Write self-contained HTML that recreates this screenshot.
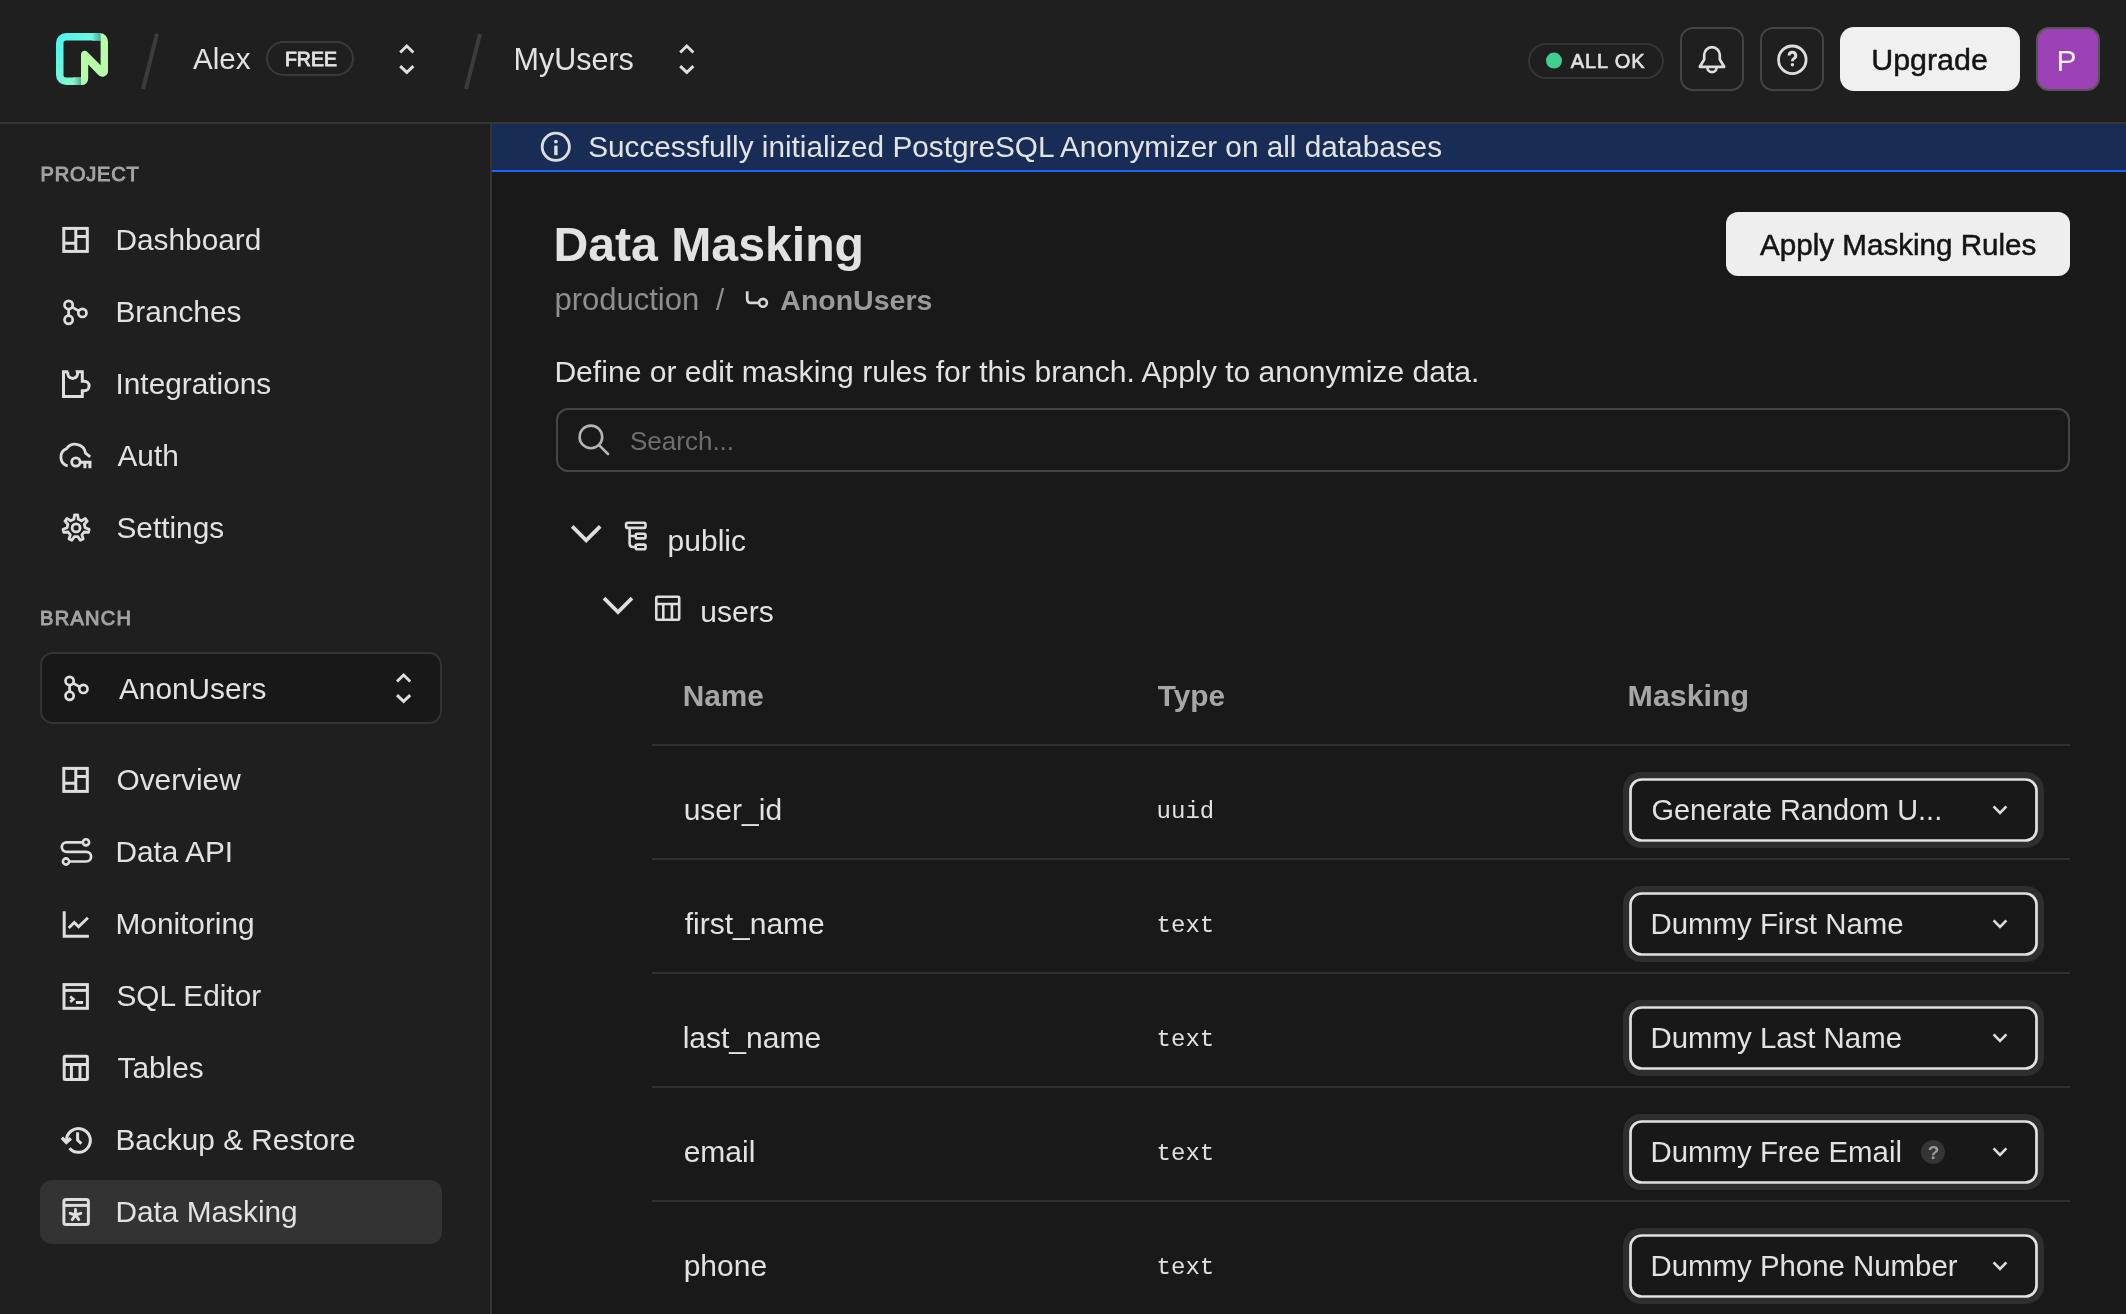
<!DOCTYPE html><html><head><meta charset="utf-8"><style>html,body{margin:0;padding:0;background:#191919;width:2126px;height:1314px;overflow:hidden}svg{position:absolute;left:0;top:0;will-change:transform}text{font-family:"Liberation Sans",sans-serif}text.m{font-family:"Liberation Mono",monospace}</style></head><body>
<svg width="2126" height="1314" viewBox="0 0 2126 1314">
<rect x="0" y="0" width="2126" height="1314" fill="#191919"/>
<rect x="0" y="0" width="2126" height="122" fill="#1f1f1f"/>
<rect x="0" y="122" width="2126" height="2" fill="#353535"/>
<rect x="0" y="124" width="490" height="1190" fill="#1f1f1f"/>
<rect x="490" y="124" width="2" height="1190" fill="#353535"/>
<rect x="492" y="124" width="1634" height="46" fill="#172d55"/>
<rect x="492" y="170" width="1634" height="2" fill="#1c64f2"/>
<defs><linearGradient id="lg" x1="0" y1="0" x2="1" y2="1"><stop offset="0" stop-color="#4ef4f0"/><stop offset="1" stop-color="#9ff9c0"/></linearGradient></defs>
<defs><linearGradient id="sh1" x1="0" y1="0" x2="1" y2="0"><stop offset="0" stop-color="#6ff5dc"/><stop offset="1" stop-color="#4aa89a"/></linearGradient><linearGradient id="sh2" x1="0" y1="0" x2="1" y2="0"><stop offset="0" stop-color="#8df6cf"/><stop offset="1" stop-color="#56a98e"/></linearGradient></defs>
<path d="M81.2 81.25 H66 A6.25 6.25 0 0 1 59.75 75 V43 A6.25 6.25 0 0 1 66 36.75 H100.6" fill="none" stroke="url(#lg)" stroke-width="7.5"/>
<rect x="92" y="33" width="8.6" height="7.5" fill="url(#sh1)"/><rect x="73" y="77.5" width="8.2" height="7.5" fill="url(#sh2)"/>
<path d="M100.6 33 H99.5 A8.5 8.5 0 0 1 108 41.5 V71 A5.6 5.6 0 0 1 98.4 75 L88.2 64.5 V78.6 A6.4 6.4 0 0 1 81.8 85 H81 V54.6 A3.7 3.7 0 0 1 87.4 52 L100.6 65.2 Z" fill="#b7fda9"/>
<line x1="157" y1="34" x2="143" y2="89" stroke="#3c3c3c" stroke-width="4"/>
<line x1="480" y1="34" x2="466" y2="89" stroke="#3c3c3c" stroke-width="4"/>
<rect x="267" y="42" width="86" height="33" rx="16.5" fill="none" stroke="#3a3a3a" stroke-width="2"/>
<path d="M400.2 52.5 L406.8 46 L413.40000000000003 52.5 M400.2 66.1 L406.8 72.4 L413.40000000000003 66.1" fill="none" stroke="#dedede" stroke-width="2.9"/>
<path d="M680.1999999999999 52.5 L686.8 46 L693.4 52.5 M680.1999999999999 66.1 L686.8 72.4 L693.4 66.1" fill="none" stroke="#dedede" stroke-width="2.9"/>
<rect x="1529" y="44" width="134" height="34" rx="17" fill="none" stroke="#353535" stroke-width="2"/>
<circle cx="1554" cy="60.6" r="8" fill="#3fd08f"/>
<rect x="1681" y="28" width="62" height="62" rx="12" fill="none" stroke="#444" stroke-width="2"/>
<rect x="1761" y="28" width="62" height="62" rx="12" fill="none" stroke="#444" stroke-width="2"/>
<path d="M1699.8 66.8 L1704.2 59.5 V55 A7.8 7.8 0 0 1 1719.8 55 V59.5 L1724.2 66.8 Z" fill="none" stroke="#dedede" stroke-width="2.7" stroke-linejoin="round"/>
<path d="M1707.4 67.6 A4.6 4.6 0 0 0 1716.6 67.6" fill="none" stroke="#dedede" stroke-width="2.7"/>
<circle cx="1792.3" cy="59.8" r="13.8" fill="none" stroke="#dedede" stroke-width="2.8"/>
<path d="M1789.1 55.6 A3.3 3.3 0 1 1 1793.9 58.5 Q1792.4 59.3 1792.4 61.3" fill="none" stroke="#dedede" stroke-width="3"/>
<circle cx="1792.4" cy="64.7" r="1.7" fill="#dedede"/>
<rect x="1840" y="27" width="180" height="64" rx="14" fill="#f0f0f0"/>
<rect x="2037" y="28" width="62" height="62" rx="12" fill="#9c40b5" stroke="#555" stroke-width="2"/>
<rect x="41" y="653" width="400" height="70" rx="12" fill="#181818" stroke="#333" stroke-width="2"/>
<path d="M397.0 681.5 L403.6 675 L410.20000000000005 681.5 M397.0 695.1 L403.6 701.4 L410.20000000000005 695.1" fill="none" stroke="#dedede" stroke-width="2.9"/>
<rect x="40" y="1180" width="402" height="64" rx="12" fill="#333333"/>
<g fill="none" stroke="#dedede" stroke-width="3"><rect x="63.8" y="228.4" width="23.5" height="23" /><path d="M75.8 228.4 V251.4 M63.8 243.20000000000002 H75.8 M75.8 236.6 H87.3"/></g>
<g fill="none" stroke="#dedede" stroke-width="3"><rect x="63.8" y="768.4" width="23.5" height="23" /><path d="M75.8 768.4 V791.4 M63.8 783.1999999999999 H75.8 M75.8 776.6 H87.3"/></g>
<g fill="none" stroke="#dedede" stroke-width="2.7" transform="translate(0 0)"><circle cx="68.6" cy="304.9" r="4.1"/><circle cx="68.6" cy="319.8" r="4.1"/><circle cx="82.4" cy="312.9" r="4.1"/><path d="M68.6 309 V315.7 M72.2 307.1 L78.6 310.9"/></g>
<g fill="none" stroke="#dedede" stroke-width="2.7" transform="translate(1 376)"><circle cx="68.6" cy="304.9" r="4.1"/><circle cx="68.6" cy="319.8" r="4.1"/><circle cx="82.4" cy="312.9" r="4.1"/><path d="M68.6 309 V315.7 M72.2 307.1 L78.6 310.9"/></g>
<path d="M68.3 371.7 H63.5 V396.6 H82.3 V390.7 H84.4 A4.7 4.7 0 0 0 84.4 381.3 H82.3 V371.7 H77.4 A5 5 0 1 1 68 371.7 Z" fill="none" stroke="#dedede" stroke-width="3" stroke-linejoin="miter"/>
<path d="M67.7 466 A9.2 9.2 0 0 1 66.6 448.6 A10.6 10.6 0 0 1 85.6 453.2 L90.2 456.8" fill="none" stroke="#dedede" stroke-width="2.8"/>
<circle cx="75.9" cy="462" r="4.2" fill="none" stroke="#dedede" stroke-width="2.8"/>
<path d="M80 462.3 H91.5 M84.9 462.3 V468.2 M89.9 462.3 V468.2" fill="none" stroke="#dedede" stroke-width="3"/>
<path d="M74.53 514.89 L77.67 514.89 L78.32 519.18 L81.54 520.73 L85.29 518.56 L87.25 521.02 L84.30 524.19 L85.10 527.68 L89.13 529.27 L88.43 532.32 L84.11 532.00 L81.88 534.80 L83.16 538.94 L80.33 540.30 L77.89 536.72 L74.31 536.72 L71.87 540.30 L69.04 538.94 L70.32 534.80 L68.09 532.00 L63.77 532.32 L63.07 529.27 L67.10 527.68 L67.90 524.19 L64.95 521.02 L66.91 518.56 L70.66 520.73 L73.88 519.18 Z" fill="none" stroke="#dedede" stroke-width="2.8" stroke-linejoin="round"/><circle cx="76.1" cy="527.9" r="4" fill="none" stroke="#dedede" stroke-width="2.8"/>
<path d="M82.8 842.3 H66.6 A4.8 4.8 0 0 0 66.6 851.9 H86.3 A4.8 4.8 0 0 1 86.3 861.5 H69.3" fill="none" stroke="#dedede" stroke-width="2.7"/>
<circle cx="86" cy="842.3" r="3.1" fill="none" stroke="#dedede" stroke-width="2.6"/><circle cx="66" cy="861.5" r="3.1" fill="none" stroke="#dedede" stroke-width="2.6"/>
<path d="M64.2 911.2 V936.2 H88.9" fill="none" stroke="#dedede" stroke-width="3"/>
<path d="M68.7 928 L74.3 922.5 L78.6 926.7 L87.9 917.8" fill="none" stroke="#dedede" stroke-width="2.9"/>
<g fill="none" stroke="#dedede" stroke-width="3"><rect x="64" y="984.6" width="23.4" height="23.7"/><path d="M64 990.4 H87.4"/></g>
<path d="M70.2 996.6 L73.4 999.3 L70.2 1001.9" fill="none" stroke="#dedede" stroke-width="2.7"/><rect x="75.9" y="1001" width="7.2" height="3" fill="#dedede"/>
<g fill="none" stroke="#dedede" stroke-width="3"><rect x="64.2" y="1056.2" width="23.2" height="23.4" rx="1"/><path d="M64.2 1064.5 H87.4 M71.4 1064.5 V1079.6 M80 1064.5 V1079.6"/></g>
<path d="M66.5 1140.6 A11.9 11.9 0 1 1 69.5 1148.3" fill="none" stroke="#dedede" stroke-width="3"/>
<path d="M61.9 1137.6 L66.3 1142.4 L70.9 1138.4" fill="none" stroke="#dedede" stroke-width="3.4"/>
<path d="M77.6 1132.2 V1140.2 L81.4 1143.6" fill="none" stroke="#dedede" stroke-width="3"/>
<g fill="none" stroke="#dedede" stroke-width="3"><rect x="63.9" y="1199.4" width="24.5" height="25.1" rx="2"/><path d="M63.9 1205.4 H88.4"/></g>
<path d="M75.5 1215 L75.50 1209.40 M75.5 1215 L80.83 1213.27 M75.5 1215 L78.79 1219.53 M75.5 1215 L72.21 1219.53 M75.5 1215 L70.17 1213.27 " fill="none" stroke="#dedede" stroke-width="2.9" stroke-linecap="round"/>
<circle cx="555.8" cy="146.8" r="13.6" fill="none" stroke="#dedede" stroke-width="2.8"/>
<path d="M555.9 145.6 V155.2" stroke="#dedede" stroke-width="3.4"/><circle cx="555.9" cy="141.6" r="1.9" fill="#dedede"/>
<path d="M747.2 291.3 V299 Q747.2 302.9 751.1 302.9 H759" fill="none" stroke="#d6d6d6" stroke-width="2.7"/><circle cx="763" cy="302.8" r="3.9" fill="none" stroke="#d6d6d6" stroke-width="2.6"/>
<rect x="1726" y="212" width="344" height="64" rx="12" fill="#eeeeee"/>
<rect x="557" y="409" width="1512" height="62" rx="11" fill="none" stroke="#454545" stroke-width="2"/>
<circle cx="590.9" cy="436.9" r="11.3" fill="none" stroke="#b4b4b4" stroke-width="2.6"/><path d="M599.3 445.3 L608 454" stroke="#b4b4b4" stroke-width="2.6" stroke-linecap="round"/>
<path d="M572.2 526.4 L586.2 540.4 L600.2 526.4" fill="none" stroke="#dedede" stroke-width="3.7"/>
<path d="M604 598.1 L618 612.1 L632 598.1" fill="none" stroke="#dedede" stroke-width="3.7"/>
<g fill="none" stroke="#dedede" stroke-width="2.6"><rect x="626.1" y="522.7" width="19.4" height="5.2" rx="1.5"/><rect x="635.7" y="533.7" width="9.8" height="4.7" rx="1.5"/><rect x="635.7" y="544.6" width="9.8" height="4.7" rx="1.5"/><path d="M629.6 527.9 V543.5 Q629.6 547 633 547 H635.7 M629.6 536 H635.7"/></g>
<g fill="none" stroke="#dedede" stroke-width="2.6"><rect x="656.3" y="596.7" width="22.9" height="23" rx="1"/><path d="M656.3 604 H679.2 M663.3 604 V619.7 M671.9 604 V619.7"/></g>
<rect x="652" y="744" width="1418" height="2" fill="#303030"/>
<rect x="652" y="858" width="1418" height="2" fill="#303030"/>
<rect x="652" y="972" width="1418" height="2" fill="#303030"/>
<rect x="652" y="1086" width="1418" height="2" fill="#303030"/>
<rect x="652" y="1200" width="1418" height="2" fill="#303030"/>
<rect x="1626" y="775" width="415" height="70" rx="15" fill="none" stroke="#2e2e2e" stroke-width="6"/>
<rect x="1630.5" y="779.5" width="406" height="61" rx="11" fill="#181818" stroke="#e2e2e2" stroke-width="2.7"/>
<path d="M1993.6 806.4 L2000 812.9 L2006.4 806.4" fill="none" stroke="#dedede" stroke-width="2.6"/>
<rect x="1626" y="889" width="415" height="70" rx="15" fill="none" stroke="#2e2e2e" stroke-width="6"/>
<rect x="1630.5" y="893.5" width="406" height="61" rx="11" fill="#181818" stroke="#e2e2e2" stroke-width="2.7"/>
<path d="M1993.6 920.4 L2000 926.9 L2006.4 920.4" fill="none" stroke="#dedede" stroke-width="2.6"/>
<rect x="1626" y="1003" width="415" height="70" rx="15" fill="none" stroke="#2e2e2e" stroke-width="6"/>
<rect x="1630.5" y="1007.5" width="406" height="61" rx="11" fill="#181818" stroke="#e2e2e2" stroke-width="2.7"/>
<path d="M1993.6 1034.3999999999999 L2000 1040.8999999999999 L2006.4 1034.3999999999999" fill="none" stroke="#dedede" stroke-width="2.6"/>
<rect x="1626" y="1117" width="415" height="70" rx="15" fill="none" stroke="#2e2e2e" stroke-width="6"/>
<rect x="1630.5" y="1121.5" width="406" height="61" rx="11" fill="#181818" stroke="#e2e2e2" stroke-width="2.7"/>
<path d="M1993.6 1148.3999999999999 L2000 1154.8999999999999 L2006.4 1148.3999999999999" fill="none" stroke="#dedede" stroke-width="2.6"/>
<circle cx="1932.9" cy="1151.9" r="12" fill="#353535"/>
<rect x="1626" y="1231" width="415" height="70" rx="15" fill="none" stroke="#2e2e2e" stroke-width="6"/>
<rect x="1630.5" y="1235.5" width="406" height="61" rx="11" fill="#181818" stroke="#e2e2e2" stroke-width="2.7"/>
<path d="M1993.6 1262.3999999999999 L2000 1268.8999999999999 L2006.4 1262.3999999999999" fill="none" stroke="#dedede" stroke-width="2.6"/>
<text x="193.00" y="69" font-size="29.5" fill="#e2e2e2" xml:space="preserve">Alex</text>
<text x="284.90" y="66" font-size="19.5" fill="#e2e2e2" stroke="#e2e2e2" stroke-width="0.8" xml:space="preserve">FREE</text>
<text x="513.50" y="69.6" font-size="30.5" fill="#e2e2e2" xml:space="preserve">MyUsers</text>
<text x="1570.80" y="68.2" font-size="20" fill="#e2e2e2" letter-spacing="0.9" stroke="#e2e2e2" stroke-width="0.6" xml:space="preserve">ALL OK</text>
<text x="1871.25" y="70" font-size="30.4" fill="#141414" stroke="#141414" stroke-width="0.5" xml:space="preserve">Upgrade</text>
<text x="2056.50" y="70.7" font-size="30" fill="#f4f4f4" xml:space="preserve">P</text>
<text x="40.50" y="181" font-size="20" fill="#a3a3a3" letter-spacing="0.8" stroke="#a3a3a3" stroke-width="1.0" xml:space="preserve">PROJECT</text>
<text x="115.50" y="250" font-size="29.8" fill="#e2e2e2" xml:space="preserve">Dashboard</text>
<text x="115.50" y="322" font-size="29.8" fill="#e2e2e2" xml:space="preserve">Branches</text>
<text x="115.50" y="394" font-size="29.8" fill="#e2e2e2" xml:space="preserve">Integrations</text>
<text x="117.50" y="466" font-size="29.8" fill="#e2e2e2" xml:space="preserve">Auth</text>
<text x="116.50" y="538" font-size="29.8" fill="#e2e2e2" xml:space="preserve">Settings</text>
<text x="40.00" y="625.3" font-size="20" fill="#a3a3a3" letter-spacing="1.3" stroke="#a3a3a3" stroke-width="1.0" xml:space="preserve">BRANCH</text>
<text x="119.00" y="698.5" font-size="29.8" fill="#e2e2e2" xml:space="preserve">AnonUsers</text>
<text x="116.50" y="790" font-size="29.8" fill="#e2e2e2" xml:space="preserve">Overview</text>
<text x="115.50" y="862" font-size="29.8" fill="#e2e2e2" xml:space="preserve">Data API</text>
<text x="115.50" y="934" font-size="29.8" fill="#e2e2e2" xml:space="preserve">Monitoring</text>
<text x="116.50" y="1006" font-size="29.8" fill="#e2e2e2" xml:space="preserve">SQL Editor</text>
<text x="117.50" y="1078" font-size="29.8" fill="#e2e2e2" xml:space="preserve">Tables</text>
<text x="115.50" y="1150" font-size="29.8" fill="#e2e2e2" xml:space="preserve">Backup &amp; Restore</text>
<text x="115.50" y="1222" font-size="29.8" fill="#e2e2e2" xml:space="preserve">Data Masking</text>
<text x="588.20" y="157.1" font-size="29.75" fill="#e2e2e2" xml:space="preserve">Successfully initialized PostgreSQL Anonymizer on all databases</text>
<text x="553.40" y="261" font-size="48.2" fill="#e2e2e2" font-weight="700" xml:space="preserve">Data Masking</text>
<text x="554.40" y="310" font-size="31" fill="#8e8e8e" xml:space="preserve">production</text>
<text x="716.00" y="310" font-size="29.5" fill="#8e8e8e" xml:space="preserve">/</text>
<text x="780.30" y="310" font-size="28.5" fill="#9a9a9a" font-weight="700" xml:space="preserve">AnonUsers</text>
<text x="554.40" y="382" font-size="30.1" fill="#e2e2e2" xml:space="preserve">Define or edit masking rules for this branch. Apply to anonymize data.</text>
<text x="1760.05" y="254.6" font-size="29.6" fill="#141414" stroke="#141414" stroke-width="0.5" xml:space="preserve">Apply Masking Rules</text>
<text x="630.00" y="450.2" font-size="26" fill="#6e6e6e" xml:space="preserve">Search...</text>
<text x="667.60" y="550.6" font-size="30" fill="#e2e2e2" xml:space="preserve">public</text>
<text x="700.30" y="622.1" font-size="30" fill="#e2e2e2" xml:space="preserve">users</text>
<text x="682.70" y="706.4" font-size="29.8" fill="#a6a6a6" font-weight="700" xml:space="preserve">Name</text>
<text x="1157.70" y="706.4" font-size="29.8" fill="#a6a6a6" font-weight="700" xml:space="preserve">Type</text>
<text x="1627.60" y="706.4" font-size="30.4" fill="#a6a6a6" font-weight="700" xml:space="preserve">Masking</text>
<text x="683.70" y="820" font-size="30" fill="#e2e2e2" xml:space="preserve">user_id</text>
<text x="1156.60" y="818" font-size="24" fill="#e0e0e0" class="m" xml:space="preserve">uuid</text>
<text x="1651.50" y="820.2" font-size="28.9" fill="#e2e2e2" xml:space="preserve">Generate Random U...</text>
<text x="684.70" y="934" font-size="30" fill="#e2e2e2" xml:space="preserve">first_name</text>
<text x="1156.60" y="932" font-size="24" fill="#e0e0e0" class="m" xml:space="preserve">text</text>
<text x="1650.50" y="934.2" font-size="29.4" fill="#e2e2e2" xml:space="preserve">Dummy First Name</text>
<text x="682.70" y="1048" font-size="30" fill="#e2e2e2" xml:space="preserve">last_name</text>
<text x="1156.60" y="1046" font-size="24" fill="#e0e0e0" class="m" xml:space="preserve">text</text>
<text x="1650.50" y="1048.2" font-size="29.4" fill="#e2e2e2" xml:space="preserve">Dummy Last Name</text>
<text x="683.70" y="1162" font-size="30" fill="#e2e2e2" xml:space="preserve">email</text>
<text x="1156.60" y="1160" font-size="24" fill="#e0e0e0" class="m" xml:space="preserve">text</text>
<text x="1650.50" y="1162.2" font-size="29.4" fill="#e2e2e2" xml:space="preserve">Dummy Free Email</text>
<text x="1927.80" y="1158.8" font-size="19" fill="#9c9c9c" font-weight="700" xml:space="preserve">?</text>
<text x="683.70" y="1276" font-size="30" fill="#e2e2e2" xml:space="preserve">phone</text>
<text x="1156.60" y="1274" font-size="24" fill="#e0e0e0" class="m" xml:space="preserve">text</text>
<text x="1650.50" y="1276.2" font-size="29.4" fill="#e2e2e2" xml:space="preserve">Dummy Phone Number</text>
</svg></body></html>
